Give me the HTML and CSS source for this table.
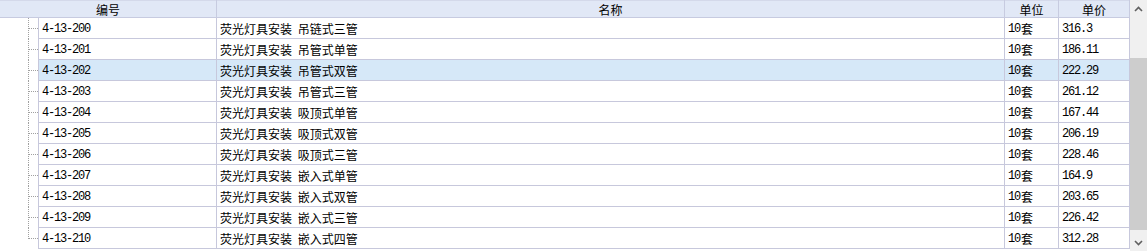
FILE: index.html
```html
<!DOCTYPE html>
<html lang="zh">
<head>
<meta charset="utf-8">
<link rel="stylesheet" href="styles.css">
</head>
<body>
<div class="grid">
  <div class="main">
    <div class="head">
      <div class="hc c-code">编号</div>
      <div class="hc c-name">名称</div>
      <div class="hc c-unit">单位</div>
      <div class="hc c-price">单价</div>
    </div>
    <div class="body">
      <div class="row"><div class="tree"></div><div class="cell c-codeb num">4-13-200</div><div class="cell c-name">荧光灯具安装 吊链式三管</div><div class="cell c-unit"><span class="num">10</span>套</div><div class="cell c-price num">316.3</div></div>
      <div class="row"><div class="tree"></div><div class="cell c-codeb num">4-13-201</div><div class="cell c-name">荧光灯具安装 吊管式单管</div><div class="cell c-unit"><span class="num">10</span>套</div><div class="cell c-price num">186.11</div></div>
      <div class="row sel"><div class="tree"></div><div class="cell c-codeb num">4-13-202</div><div class="cell c-name">荧光灯具安装 吊管式双管</div><div class="cell c-unit"><span class="num">10</span>套</div><div class="cell c-price num">222.29</div></div>
      <div class="row"><div class="tree"></div><div class="cell c-codeb num">4-13-203</div><div class="cell c-name">荧光灯具安装 吊管式三管</div><div class="cell c-unit"><span class="num">10</span>套</div><div class="cell c-price num">261.12</div></div>
      <div class="row"><div class="tree"></div><div class="cell c-codeb num">4-13-204</div><div class="cell c-name">荧光灯具安装 吸顶式单管</div><div class="cell c-unit"><span class="num">10</span>套</div><div class="cell c-price num">167.44</div></div>
      <div class="row"><div class="tree"></div><div class="cell c-codeb num">4-13-205</div><div class="cell c-name">荧光灯具安装 吸顶式双管</div><div class="cell c-unit"><span class="num">10</span>套</div><div class="cell c-price num">206.19</div></div>
      <div class="row"><div class="tree"></div><div class="cell c-codeb num">4-13-206</div><div class="cell c-name">荧光灯具安装 吸顶式三管</div><div class="cell c-unit"><span class="num">10</span>套</div><div class="cell c-price num">228.46</div></div>
      <div class="row"><div class="tree"></div><div class="cell c-codeb num">4-13-207</div><div class="cell c-name">荧光灯具安装 嵌入式单管</div><div class="cell c-unit"><span class="num">10</span>套</div><div class="cell c-price num">164.9</div></div>
      <div class="row"><div class="tree"></div><div class="cell c-codeb num">4-13-208</div><div class="cell c-name">荧光灯具安装 嵌入式双管</div><div class="cell c-unit"><span class="num">10</span>套</div><div class="cell c-price num">203.65</div></div>
      <div class="row"><div class="tree"></div><div class="cell c-codeb num">4-13-209</div><div class="cell c-name">荧光灯具安装 嵌入式三管</div><div class="cell c-unit"><span class="num">10</span>套</div><div class="cell c-price num">226.42</div></div>
      <div class="row"><div class="tree last"></div><div class="cell c-codeb num">4-13-210</div><div class="cell c-name">荧光灯具安装 嵌入式四管</div><div class="cell c-unit"><span class="num">10</span>套</div><div class="cell c-price num">312.28</div></div>
    </div>
  </div>
  <div class="scroll">
    <div class="arrow">
      <svg width="9" height="6" viewBox="0 0 9 6"><path d="M1 5 L4.5 1.5 L8 5" fill="none" stroke="#606060" stroke-width="1.6"/></svg>
    </div>
    <div class="track"><div class="thumb"></div></div>
    <div class="arrow">
      <svg width="9" height="6" viewBox="0 0 9 6"><path d="M1 1 L4.5 4.5 L8 1" fill="none" stroke="#606060" stroke-width="1.6"/></svg>
    </div>
  </div>
</div>
</body>
</html>
```

FILE: styles.css
```css
html, body {
  margin: 0;
  padding: 0;
  background: #ffffff;
}
body {
  font-family: "Noto Sans CJK SC", "Liberation Sans", sans-serif;
  font-size: 12px;
  color: #000;
}
.grid {
  display: flex;
  width: 1147px;
  height: 251px;
  overflow: hidden;
}
.main {
  width: 1130px;
  display: flex;
  flex-direction: column;
}
.head {
  display: flex;
  height: 17px;
  background: #e1e8f6;
  border-bottom: 1px solid #c7cbe0;
  box-shadow: inset 0 1px 0 #d4d9ea;
}
.hc {
  display: flex;
  align-items: center;
  justify-content: center;
  border-right: 1px solid #c7cbe0;
  line-height: 17px;
  padding-top: 1px;
  box-sizing: border-box;
}
.head .c-code { width: 217px; }
.head .c-name { width: 788px; }
.head .c-unit { width: 54px; }
.head .c-price { width: 71px; }
.body {
  display: flex;
  flex-direction: column;
}
.row {
  display: flex;
  height: 21px;
}
.tree {
  width: 38px;
  position: relative;
  flex: none;
}
.tree::before {
  content: "";
  position: absolute;
  left: 28px;
  top: 0;
  height: 21px;
  border-left: 1px dotted #a0a0a0;
}
.tree.last::before {
  height: 11px;
}
.tree::after {
  content: "";
  position: absolute;
  left: 29px;
  top: 10px;
  width: 9px;
  border-top: 1px dotted #a0a0a0;
}
.cell {
  height: 20px;
  border-right: 1px solid #c7c8dc;
  border-bottom: 1px solid #c7c8dc;
  display: flex;
  align-items: center;
  padding-left: 3px;
  padding-top: 1px;
  box-sizing: border-box;
  white-space: nowrap;
  flex: none;
  height: 21px;
}
.c-codeb {
  width: 179px;
  border-left: 1px solid #c7c8dc;
}
.cell.c-name { width: 788px; word-spacing: 3px; }
.cell.c-unit { width: 54px; }
.cell.c-price { width: 71px; }
.num {
  font-family: "Liberation Mono", monospace;
  font-size: 12px;
  letter-spacing: -1.2px;
}
.c-unit .num {
  margin-right: 1px;
}
.sel .cell {
  background: #d6e8f8;
}
.scroll {
  width: 17px;
  background: #f0f0f0;
  display: flex;
  flex-direction: column;
}
.arrow {
  height: 17px;
  display: flex;
  align-items: center;
  justify-content: center;
  flex: none;
}
.track {
  flex: 1;
  display: flex;
  flex-direction: column;
  justify-content: flex-end;
}
.thumb {
  height: 172px;
  background: #cdcdcd;
  margin-bottom: 4px;
}
```
